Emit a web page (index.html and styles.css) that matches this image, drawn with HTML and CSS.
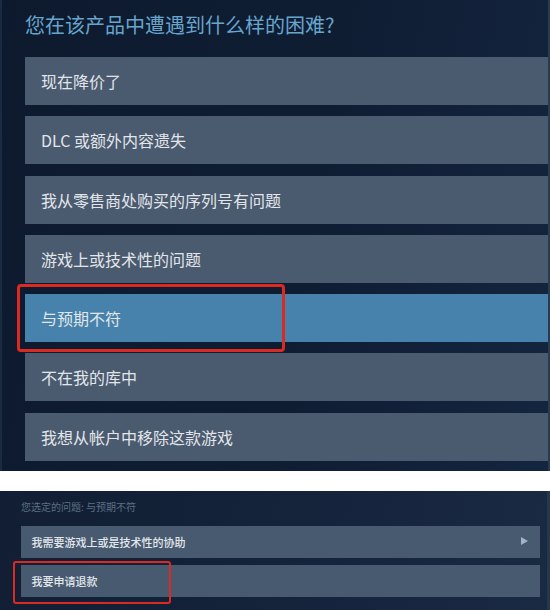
FILE: index.html
```html
<!DOCTYPE html>
<html lang="zh-CN">
<head>
<meta charset="utf-8">
<title>帮助</title>
<link rel="stylesheet" href="styles.css">
</head>
<body>
  <section class="panel panel-issues">
    <h1 class="issues-title">您在该产品中遭遇到什么样的困难?</h1>
    <ul class="issue-list">
      <li class="issue">现在降价了</li>
      <li class="issue">DLC 或额外内容遗失</li>
      <li class="issue">我从零售商处购买的序列号有问题</li>
      <li class="issue">游戏上或技术性的问题</li>
      <li class="issue issue-active">与预期不符<span class="mark mark-lg"></span></li>
      <li class="issue">不在我的库中</li>
      <li class="issue">我想从帐户中移除这款游戏</li>
    </ul>
  </section>

  <section class="panel panel-choice">
    <p class="choice-caption">您选定的问题: 与预期不符</p>
    <ul class="choice-list">
      <li class="choice">我需要游戏上或是技术性的协助<span class="choice-arrow"></span></li>
      <li class="choice">我要申请退款<span class="mark mark-sm"></span></li>
    </ul>
  </section>
</body>
</html>
```

FILE: styles.css
```css
* {
  box-sizing: border-box;
}

html, body {
  margin: 0;
  padding: 0;
  background: #ffffff;
}

body {
  width: 550px;
  font-family: "Noto Sans CJK SC", "Noto Sans", sans-serif;
}

ul {
  list-style: none;
  margin: 0;
  padding: 0;
}

/* ---- question list ---- */
.panel-issues {
  height: 471px;
  padding: 13px 2px 0 25px;
  background: linear-gradient(100deg, #0d1a2e 0%, #0f1d33 55%, #14253f 100%);
  box-shadow: inset 2px 0 0 #1a2a40, inset -2px 0 0 #2a3a50;
}

.issues-title {
  margin: 0 0 20px 0;
  font-size: 20px;
  font-weight: 400;
  line-height: 24px;
  color: #67a5cd;
}

.issue-list {
  display: flex;
  flex-direction: column;
  gap: 11.3px;
}

.issue {
  position: relative;
  height: 48px;
  display: flex;
  align-items: center;
  padding-left: 16px;
  font-size: 16px;
  color: #e2e6ea;
  background: #4a5a6f;
}

.issue-active {
  background: #4682ab;
}

/* red outline drawn around the picked entries */
.mark {
  position: absolute;
  border: 3px solid #dc2a22;
  border-radius: 4px;
  pointer-events: none;
}

.mark-lg {
  left: -8px;
  top: -10px;
  bottom: -10px;
  width: 268px;
}

/* ---- follow-up choices ---- */
.panel-choice {
  margin-top: 20px;
  height: 119px;
  padding: 9px 10px 0 21px;
  background: linear-gradient(100deg, #111e33 0%, #15243c 60%, #1a2a42 100%);
  box-shadow: inset -3px 0 0 #26364c;
}

.choice-caption {
  margin: 0 0 12px 0;
  font-size: 10px;
  line-height: 14px;
  color: #5d6f83;
}

.choice-list {
  display: flex;
  flex-direction: column;
  gap: 7.5px;
}

.choice {
  position: relative;
  height: 31.5px;
  display: flex;
  align-items: center;
  padding-left: 10.5px;
  font-size: 11px;
  font-weight: 500;
  color: #e3e8ec;
  background: #485a70;
}

.choice-arrow {
  position: absolute;
  right: 12px;
  top: 50%;
  margin-top: -4.5px;
  width: 0;
  height: 0;
  border-top: 4.5px solid transparent;
  border-bottom: 4.5px solid transparent;
  border-left: 7px solid #a3b3c5;
}

.mark-sm {
  border-width: 2px;
  border-radius: 3px;
  left: -8px;
  top: -4px;
  bottom: -7px;
  width: 158px;
}
```
